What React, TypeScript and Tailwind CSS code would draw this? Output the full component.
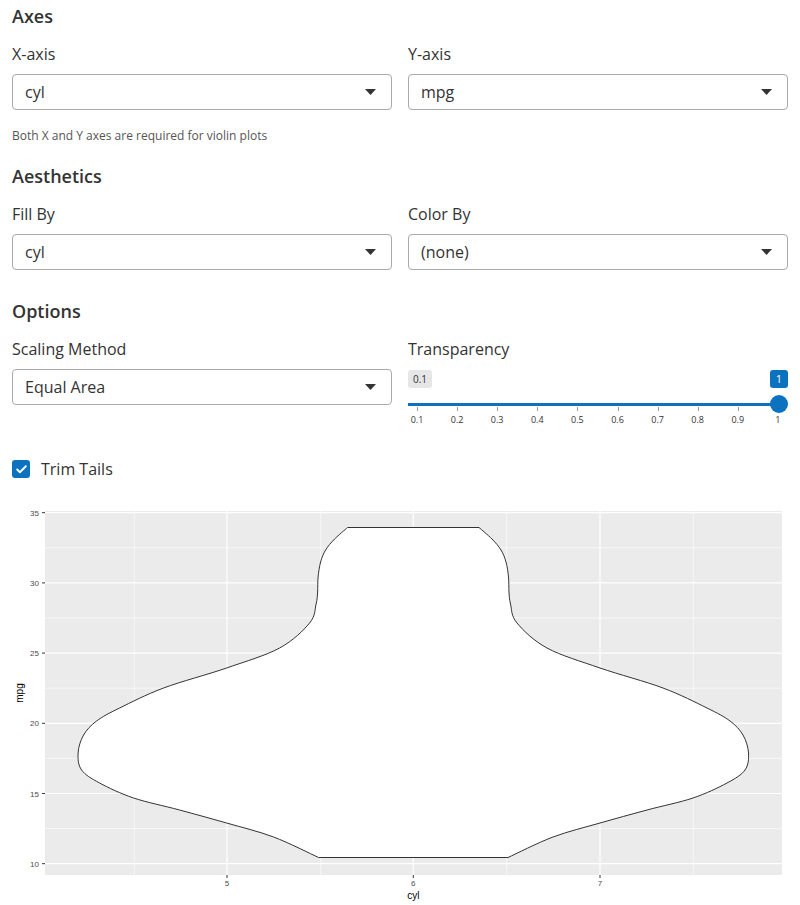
import { Check } from 'lucide-react'

type Pt = [number, number]

// right half of the violin, top to bottom (page coordinates)
const rightSide: Pt[] = [
  [479, 527.5], [492, 539], [501, 550], [506, 562], [508.5, 577], [509, 592], [510.5, 604],
  [517, 623], [547, 648], [600, 668], [663, 688], [707, 708], [730, 721],
  [743, 735], [748.5, 753], [745, 770], [727, 783], [693, 798], [647, 810],
  [600, 823], [553, 837], [508, 857.5]
]

const CX = 413.3

function smooth(pts: Pt[]) {
  let d = ''
  for (let i = 0; i < pts.length - 1; i++) {
    const p0 = pts[i - 1] || pts[i]
    const p1 = pts[i]
    const p2 = pts[i + 1]
    const p3 = pts[i + 2] || p2
    const c1 = [p1[0] + (p2[0] - p0[0]) / 6, p1[1] + (p2[1] - p0[1]) / 6]
    const c2 = [p2[0] - (p3[0] - p1[0]) / 6, p2[1] - (p3[1] - p1[1]) / 6]
    d += ` C${c1[0].toFixed(1)},${c1[1].toFixed(1)} ${c2[0].toFixed(1)},${c2[1].toFixed(1)} ${p2[0]},${p2[1]}`
  }
  return d
}

function violinPath() {
  const left: Pt[] = rightSide.map(([x, y]) => [+(2 * CX - x).toFixed(1), y] as Pt).reverse()
  return (
    `M${left[left.length - 1][0]},${left[left.length - 1][1]} L${rightSide[0][0]},${rightSide[0][1]}` +
    smooth(rightSide) +
    ` L${left[0][0]},${left[0][1]}` +
    smooth(left) +
    ' Z'
  )
}

function Select({ value }: { value: string }) {
  return (
    <div className="h-9 border border-[#aaaaaa] rounded-[4px] bg-white flex items-center justify-between pl-3 pr-[15px]">
      <span className="text-[16px] text-[#333333]">{value}</span>
      <svg width="11" height="6" viewBox="0 0 11 6">
        <path d="M0 0 L11 0 L5.5 6 Z" fill="#333333" />
      </svg>
    </div>
  )
}

function Field({ label, value }: { label: string; value: string }) {
  return (
    <div>
      <div className="text-[16px] leading-[22px] text-[#333333] mb-[9px]">{label}</div>
      <Select value={value} />
    </div>
  )
}

function Slider() {
  const ticks = ['0.1', '0.2', '0.3', '0.4', '0.5', '0.6', '0.7', '0.8', '0.9', '1']
  return (
    <div>
      <div className="text-[16px] leading-[22px] text-[#333333] mb-[10px]">Transparency</div>
      <div className="relative h-[58px]">
        <div className="absolute left-0 top-0 h-[18px] px-[5px] rounded-[3px] bg-[#e6e6e6] text-[10px] leading-[18px] text-[#333333]">0.1</div>
        <div className="absolute right-0 top-0 h-[18px] w-[18px] text-center rounded-[3px] bg-[#0a72bf] text-[11px] leading-[18px] text-white">1</div>
        <div className="absolute left-0 right-[9px] top-[33px] h-[3px] bg-[#0a72bf]" />
        {ticks.map((t, i) => (
          <div key={t} className="absolute top-[37px]" style={{ left: 9 + i * 40.1 }}>
            <div className="w-px h-[4px] bg-[#999999]" />
            <div className="absolute top-[7px] -translate-x-1/2 text-[9px] leading-[12px] text-[#333333]">{t}</div>
          </div>
        ))}
        <div className="absolute right-0 top-[25px] w-[18px] h-[18px] rounded-full bg-[#0a72bf]" />
      </div>
    </div>
  )
}

function Chart() {
  const vMajor = [227, 413.3, 600]
  const vMinor = [134.3, 320.7, 506.7, 693.3]
  const yTicks = [35, 30, 25, 20, 15, 10]
  const yOf = (v: number) => 512.7 + (35 - v) * 14.04
  const hMinor = [32.5, 27.5, 22.5, 17.5, 12.5]
  return (
    <svg width="800" height="410" viewBox="0 495 800 410" className="block" style={{ fontFamily: '"Liberation Sans", Arial, sans-serif' }}>
      <rect x="45" y="511" width="737" height="364" fill="#ebebeb" />
      {hMinor.map((v) => (
        <line key={v} x1="45" x2="782" y1={yOf(v)} y2={yOf(v)} stroke="#ffffff" strokeWidth="0.6" />
      ))}
      {vMinor.map((x) => (
        <line key={x} x1={x} x2={x} y1="511" y2="875" stroke="#ffffff" strokeWidth="0.6" />
      ))}
      {yTicks.map((v) => (
        <line key={v} x1="45" x2="782" y1={yOf(v)} y2={yOf(v)} stroke="#ffffff" strokeWidth="1.2" />
      ))}
      {vMajor.map((x) => (
        <line key={x} x1={x} x2={x} y1="511" y2="875" stroke="#ffffff" strokeWidth="1.2" />
      ))}
      <path d={violinPath()} fill="#ffffff" stroke="#333333" strokeWidth="1" />
      {yTicks.map((v) => (
        <g key={v}>
          <line x1="42" x2="45" y1={yOf(v)} y2={yOf(v)} stroke="#333333" strokeWidth="1" />
          <text x="39" y={yOf(v) + 3} textAnchor="end" fontSize="8" fill="#4d4d4d">{v}</text>
        </g>
      ))}
      {[['5', 227], ['6', 413.3], ['7', 600]].map(([t, x]) => (
        <g key={t}>
          <line x1={x} x2={x} y1="875" y2="878" stroke="#333333" strokeWidth="1" />
          <text x={x} y="886" textAnchor="middle" fontSize="8" fill="#4d4d4d">{t}</text>
        </g>
      ))}
      <text x="413.3" y="899" textAnchor="middle" fontSize="10" fill="#000000">cyl</text>
      <text x="0" y="0" transform="translate(23 693) rotate(-90)" textAnchor="middle" fontSize="10" fill="#000000">mpg</text>
    </svg>
  )
}

export default function App() {
  return (
    <div className="w-[800px] h-[905px] bg-white overflow-hidden text-[#333333]" style={{ fontFamily: '"Open Sans", "Noto Sans", sans-serif' }}>
      <div className="px-3">
        {/* Axes */}
        <h3 className="pt-[5px] text-[18px] leading-[22px] font-semibold">Axes</h3>
        <div className="grid grid-cols-2 gap-4 mt-4">
          <Field label="X-axis" value="cyl" />
          <Field label="Y-axis" value="mpg" />
        </div>
        <p className="mt-[18px] text-[12px] leading-[16px] text-[#555555]">Both X and Y axes are required for violin plots</p>

        {/* Aesthetics */}
        <h3 className="mt-[21px] text-[18px] leading-[22px] font-semibold">Aesthetics</h3>
        <div className="grid grid-cols-2 gap-4 mt-4">
          <Field label="Fill By" value="cyl" />
          <Field label="Color By" value="(none)" />
        </div>

        {/* Options */}
        <h3 className="mt-[30px] text-[18px] leading-[22px] font-semibold">Options</h3>
        <div className="grid grid-cols-2 gap-4 mt-4 items-start">
          <Field label="Scaling Method" value="Equal Area" />
          <Slider />
        </div>

        <div className="flex items-center gap-[11px] mt-[31px] h-[20px]">
          <div className="w-[18px] h-[18px] rounded-[3px] bg-[#0a72bf] flex items-center justify-center">
            <Check size={13} strokeWidth={3.5} color="#ffffff" />
          </div>
          <span className="text-[16px] leading-[22px]">Trim Tails</span>
        </div>
      </div>
      <div className="mt-[16px]">
        <Chart />
      </div>
    </div>
  )
}
